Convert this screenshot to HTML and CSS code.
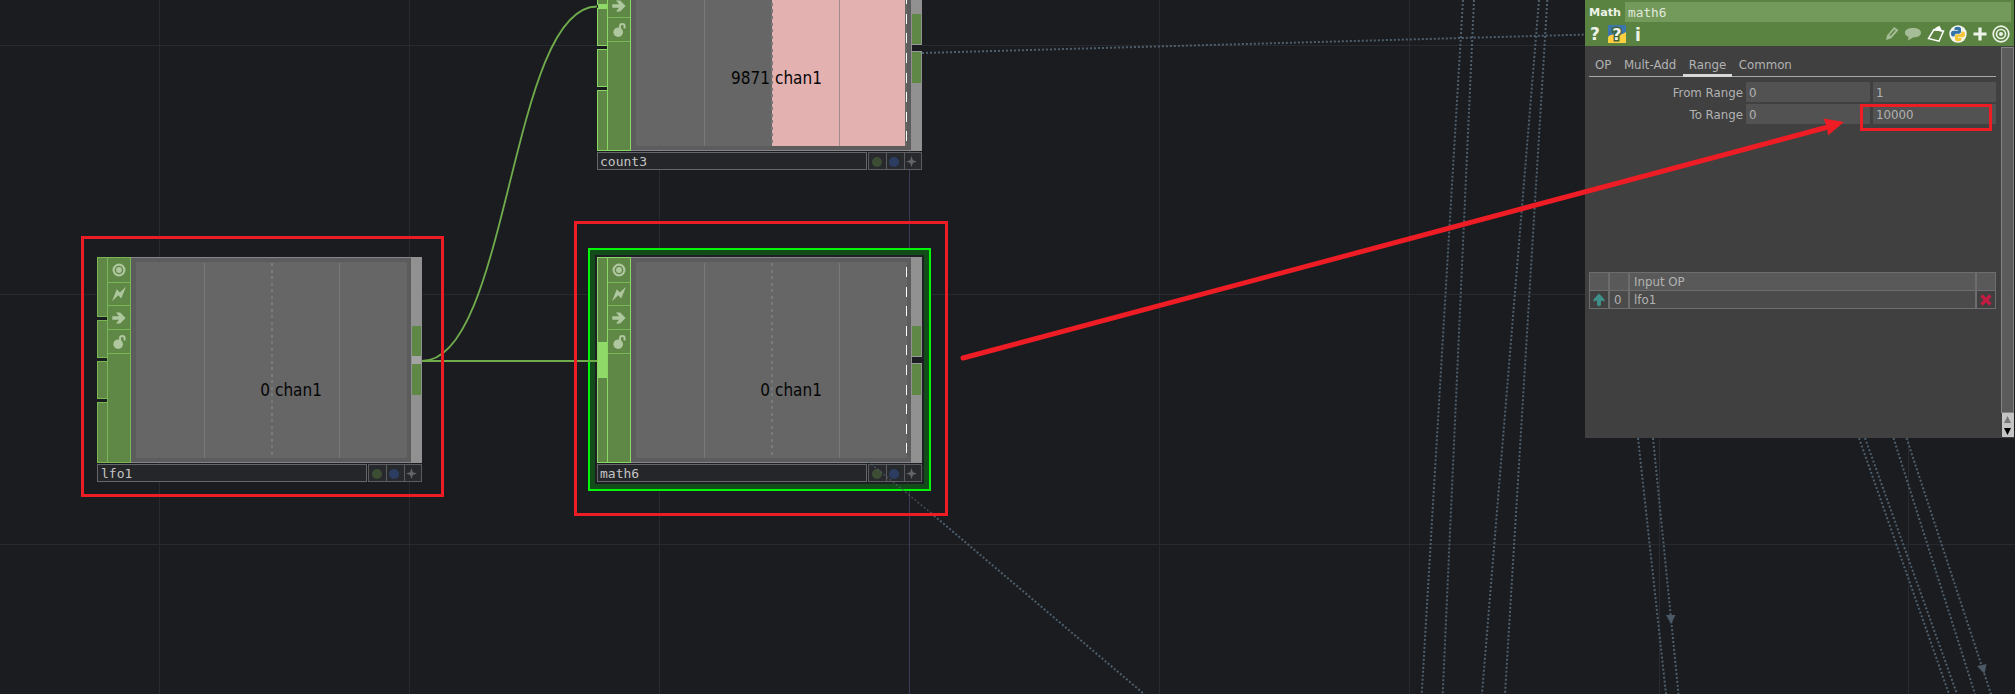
FILE: index.html
```html
<!DOCTYPE html>
<html lang="en">
<head>
<meta charset="utf-8">
<title>Network editor</title>
<link rel="stylesheet" href="styles.css">
</head>
<body>
<svg width="0" height="0" class="defs">
  <symbol id="i-view" viewBox="0 0 16 16"><circle cx="8" cy="8" r="5.4" fill="none" stroke="currentColor" stroke-width="2.2"/><circle cx="8" cy="8" r="2.9" fill="currentColor"/></symbol>
  <symbol id="i-bolt" viewBox="0 0 16 16"><path d="M1 15.2 5.8 3.2 8.8 6.4 15 .8 10.2 12.4 7.2 9.2Z" fill="currentColor"/></symbol>
  <symbol id="i-arrow" viewBox="0 0 16 16"><path d="M1.3 6.2H8L5 2.6H9.2L14.6 8 9.2 13.4H5L8 9.8H1.3Z" fill="currentColor"/></symbol>
  <symbol id="i-lock" viewBox="0 0 16 16"><circle cx="7.2" cy="10.2" r="4.8" fill="currentColor"/><path d="M9 7V4.4A2.3 2.3 0 0 1 13.6 4.4V6.6" fill="none" stroke="currentColor" stroke-width="2"/></symbol>
  <symbol id="i-star" viewBox="0 0 12 12"><path d="M6 0 7.5 4.5 12 6 7.5 7.5 6 12 4.5 7.5 0 6 4.5 4.5Z" fill="currentColor"/></symbol>
</svg>
<main class="network">
  <svg class="wires" width="2015" height="694">
    <path class="grid" d="M159.5 0V694M409.5 0V694M659.5 0V694M1159.5 0V694M1409.5 0V694M1659.5 0V694M1908.5 0V694M0 45.5H2015M0 294.5H2015M0 544.5H2015"/>
    <path class="grid origin" d="M909.5 0V694"/>
    <g class="refs">
      <path d="M922 53 1588 34.5M1463 0 1421.7 694M1474 0 1442.7 694M1539 0 1482 694M1547.3 0 1505 694M1638 438 1666 694M1653 438 1678.5 694M1859 438 1949 694M1865 438 1957 694M1893.5 438 1975 694M1906.5 438 1991 694M931 513 1144 694"/>
    </g>
    <path class="tip" d="M1666 615H1675.5L1671 624ZM1977 666 1986.500 664 1984.500 674Z"/>
    <path class="wire" d="M422 361C509 361 510 6.500 597 6.500"/>
  </svg>

  <section class="node count">
    <div class="body">
      <div class="inputs"><i class="in1"><b class="plug low"></b></i><i class="in2"></i><i class="in2"></i><i class="in3"></i></div>
      <div class="flags"><span class="f1"><svg><use href="#i-view"/></svg></span><span class="f2"><svg><use href="#i-bolt"/></svg></span><span class="f3"><svg><use href="#i-arrow"/></svg></span><span class="f3"><svg><use href="#i-lock"/></svg></span></div>
      <div class="viewer"><div class="plot"><div class="fill"></div><i class="line q1"></i><i class="line dash"></i><i class="line q3"></i><div class="reading"><span>9871</span><span>chan1</span></div><i class="limit"></i></div></div>
      <div class="outputs split"><i></i><b></b><i></i></div>
    </div>
    <div class="bar"><div class="name">count3</div><div class="opts"><span><i class="dot green"></i></span><span><i class="dot blue"></i></span><span><svg><use href="#i-star"/></svg></span></div></div>
  </section>

  <section class="node lfo">
    <div class="body">
      <div class="inputs"><i class="in1"></i><i class="in2"></i><i class="in2"></i><i class="in3"></i></div>
      <div class="flags"><span class="f1"><svg><use href="#i-view"/></svg></span><span class="f2"><svg><use href="#i-bolt"/></svg></span><span class="f3"><svg><use href="#i-arrow"/></svg></span><span class="f3"><svg><use href="#i-lock"/></svg></span></div>
      <div class="viewer"><div class="plot"><i class="line q1"></i><i class="line dash"></i><i class="line q3"></i><div class="reading"><span>0</span><span>chan1</span></div></div></div>
      <div class="outputs"><i></i><b></b><i></i></div>
    </div>
    <div class="bar"><div class="name">lfo1</div><div class="opts"><span><i class="dot green"></i></span><span><i class="dot blue"></i></span><span><svg><use href="#i-star"/></svg></span></div></div>
  </section>

  <div class="selection"><div></div></div>
  <svg class="wires" width="2015" height="694"><path class="wire" d="M422 361H597"/></svg>
  <section class="node math">
    <div class="body">
      <div class="inputs"><i class="in-all"><b class="plug"></b></i></div>
      <div class="flags"><span class="f1"><svg><use href="#i-view"/></svg></span><span class="f2"><svg><use href="#i-bolt"/></svg></span><span class="f3"><svg><use href="#i-arrow"/></svg></span><span class="f3"><svg><use href="#i-lock"/></svg></span></div>
      <div class="viewer"><div class="plot"><i class="line q1"></i><i class="line dash"></i><i class="line q3"></i><div class="reading"><span>0</span><span>chan1</span></div><i class="limit"></i></div></div>
      <div class="outputs split"><i></i><b></b><i></i></div>
    </div>
    <div class="bar"><div class="name">math6</div><div class="opts"><span><i class="dot green"></i></span><span><i class="dot blue"></i></span><span><svg><use href="#i-star"/></svg></span></div></div>
  </section>

  <aside class="panel">
    <header>
      <div class="title"><strong>Math</strong><div class="opname">math6</div></div>
      <div class="tools">
        <svg class="help" width="16" height="18" viewBox="0 0 16 18"><text x="8" y="15" text-anchor="middle">?</text></svg>
        <svg class="pyhelp" width="18" height="18" viewBox="0 0 18 18"><path fill="#3b77ad" d="M0 0H18V18H0Z"/><path fill="#ffcf40" d="M0 12C4 7 12 12 18 7V18H0Z"/><text x="9" y="15" text-anchor="middle">?</text></svg>
        <svg class="info" width="8" height="18" viewBox="0 0 8 18"><text x="4" y="15.500" text-anchor="middle">i</text></svg>
        <span class="space"></span>
        <svg width="16" height="16" viewBox="0 0 16 16"><path d="M2 14 3 9.500 10 1 14.500 4 7 12.500Z" fill="#a5bd96"/><path d="M6 9.500 11 4" stroke="#5a8341" stroke-width="1.300"/></svg>
        <svg width="18" height="16" viewBox="0 0 18 16"><path d="M9 2C14 2 17 4 17 6.800S14 11.500 9 11.500L4 14.500 4.600 10.800C2 10 1 8.600 1 6.800 1 4 4 2 9 2Z" fill="#a5bd96"/></svg>
        <svg width="18" height="18" viewBox="0 0 18 18"><path d="M7 4.500 1.500 13.500 12 16.200 16.500 6Z" fill="none" stroke="#fff" stroke-width="1.500"/><path d="M7 5.500 8.500 2.800 12.500 .8 15.500 6.500Z" fill="#fff"/></svg>
        <svg width="18" height="18" viewBox="0 0 18 18"><circle cx="9" cy="9" r="8.700" fill="#f4f6ee"/><path d="M5.500 5V3.500Q5.500 1.800 8.600 1.800T12 3.800V7Q12 8.800 10 8.800H7.400Q5.400 8.800 5.400 11.500H4Q2 11.500 2 8.600T4.500 5.800H9V5Z" fill="#3472a8"/><path d="M12.500 13V14.500Q12.500 16.200 9.400 16.200T6 14.200V11Q6 9.200 8 9.200H10.600Q12.600 9.200 12.600 6.500H14Q16 6.500 16 9.400T13.500 12.200H9V13Z" fill="#f5c637"/></svg>
        <svg width="16" height="16" viewBox="0 0 16 16"><path d="M8 1.500V14.500M1.500 8H14.500" stroke="#eef3ea" stroke-width="3.200"/></svg>
        <svg width="18" height="18" viewBox="0 0 18 18"><g fill="none" stroke="#eef3ea" stroke-width="1.700"><circle cx="9" cy="9" r="7.800"/><circle cx="9" cy="9" r="4.500"/></g><circle cx="9" cy="9" r="2" fill="#eef3ea"/></svg>
      </div>
    </header>
    <div class="content">
      <div class="page">
        <nav><span>OP</span><span>Mult-Add</span><span class="on">Range</span><span>Common</span></nav>
        <div class="params">
          <label>From Range</label><div class="field">0</div><div class="field">1</div>
          <label>To Range</label><div class="field">0</div><div class="field">10000</div>
        </div>
        <div class="table">
          <div class="head"></div><div class="head"></div><div class="head">Input OP</div><div class="head"></div>
          <div class="act"><svg width="12" height="14" viewBox="0 0 12 14"><path d="M6 .5 11.500 6.500V8.500L8 7.500V12L6 13.500 4 12V7.500L.5 8.500V6.500Z" fill="#3f8f8a"/></svg></div><div class="num">0</div><div>lfo1</div><div class="act"><svg width="12" height="12" viewBox="0 0 12 12"><path d="M1.500 1.500 10.500 10.500M10.500 1.500 1.500 10.500" stroke="#c31b42" stroke-width="3.200"/></svg></div>
        </div>
      </div>
      <div class="scroll"><div class="track"></div><div class="steps"><svg width="12" height="24" viewBox="0 0 12 24"><path d="M2 10 5.500 3 9 10Z" fill="#777"/><path d="M2 15 5.500 22 9 15Z" fill="#000"/></svg></div></div>
    </div>
  </aside>

  <svg class="marks" width="2015" height="694">
    <path class="faint" d="M865 459 931 513"/>
    <g class="box"><rect x="82.500" y="237.500" width="360" height="258"/><rect x="575.500" y="222.500" width="371" height="292"/><rect x="1861.500" y="105.500" width="129" height="24"/></g>
    <path class="arrow" d="M963 358 1828 127"/>
    <path d="M1844 122 1823.500 118.500 1827 127 1828 135.500Z" fill="#ee1c24"/>
  </svg>
</main>
</body>
</html>
```
FILE: styles.css
```css
* { box-sizing: border-box; }
body { margin: 0; background: #1b1c20; overflow: hidden; font-family: "DejaVu Sans", Verdana, sans-serif; }
.defs { position: absolute; }
.network { position: relative; width: 2015px; height: 694px; overflow: hidden; background: #1b1c20; }
.wires, .marks { position: absolute; inset: 0; }
.grid { stroke: #292a31; fill: none; }
.origin { stroke: #3b3a57; }
.refs { fill: none; stroke: #4d5e6c; stroke-width: 2; stroke-dasharray: 2 2; }
.tip { fill: #4b5966; }
.wire { fill: none; stroke: #70ac4c; stroke-width: 1.8; }

.node { position: absolute; width: 325px; }
.count { left: 597px; top: -55px; }
.lfo { left: 97px; top: 257px; }
.math { left: 597px; top: 257px; }
.body { display: flex; height: 206px; }
.inputs { width: 10px; display: flex; flex-direction: column; gap: 3px; }
.inputs > i { background: #5f8746; border: 1px solid #8ad863; border-right: 0; display: flex; flex-direction: column; }
.lfo .inputs > i { border-color: #79b656; }
.in1 { height: 60px; }
.in2 { height: 38px; }
.in3 { height: 61px; }
.inputs > .in-all { height: 206px; }
.plug { background: #8fd968; height: 36px; margin-top: 84px; }
.plug.low { height: 5px; margin-top: 58px; flex: none; position: relative; }
.flags { width: 24px; background: #5f8746; border: 1px solid #8ad863; }
.lfo .flags { border-color: #79b656; }
.flags span { display: flex; align-items: center; justify-content: center; padding-right: 1px; border-bottom: 1.5px solid #79b656; color: #afc79f; }
.flags svg { width: 16px; height: 16px; }
.f1 { height: 25px; }
.f2 { height: 23px; }
.f3 { height: 24px; }
.viewer { width: 280px; background: #5c5c5c; border: 1px solid #85878a; border-width: 1px 0; padding: 4px 4px 4px 5px; display: flex; }
.plot { position: relative; flex: 1; background: #666; }
.line { position: absolute; top: 1px; bottom: 0; width: 1px; background: #7a7a7a; }
.q1 { left: 68px; }
.dash { left: 135px; width: 1.5px; background: repeating-linear-gradient(#7a7a7a 0 3px, transparent 3px 6.5px); }
.q3 { left: 203px; }
.count .q3 { background: #a28a8a; }
.fill { position: absolute; left: 136px; right: 2px; top: 0; bottom: 0; background: #e4b1b1; }
.limit { position: absolute; left: 270px; top: 5px; bottom: 4px; width: 1px; background: repeating-linear-gradient(#fff 0 10px, transparent 10px 19.6px); }
.reading { position: absolute; left: 0; top: 116px; display: grid; grid-template-columns: 134px 1fr; column-gap: 5px; font: 17px/24px "DejaVu Sans Condensed", "DejaVu Sans", sans-serif; font-stretch: condensed; color: #050505; }
.reading span:first-child { text-align: right; }
.outputs { width: 11px; background: #919191; padding: 69px 1px 0; display: flex; flex-direction: column; }
.outputs i { height: 30px; background: #5f8746; }
.outputs b { height: 8px; background: #a3a3a6; }
.outputs i:last-child { height: 31px; }
.outputs.split b { background: #1b1c20; height: 8px; border: solid #999; border-width: 1px 0; margin-right: -1px; }
.bar { margin-top: 1px; display: flex; gap: 1px; height: 18px; }
.name { width: 270px; border: 1px solid #65666a; background: #25262a; padding-left: 2px; font: 13px/18px "DejaVu Sans Mono", monospace; color: #c4c4c4; }
.lfo .name { padding-left: 3px; }
.opts { flex: 1; display: grid; grid-template-columns: repeat(3, 1fr); border: 1px solid #5b5c60; background: #28292d; }
.opts span { display: flex; align-items: center; justify-content: center; padding: 1px 2px 0 0; }
.opts span + span { border-left: 1px solid #5b5c60; }
.opts svg { width: 11px; height: 11px; color: #64656a; }
.dot { width: 10px; height: 10px; border-radius: 50%; }
.dot.green { background: #3d4d34; }
.dot.blue { background: #2c3d62; }
.selection { position: absolute; left: 588px; top: 248px; width: 343px; height: 243px; border: 2px solid #00f508; background: #124c18; padding: 5px; display: flex; }
.selection div { flex: 1; background: #1d1f25; }

.panel { position: absolute; left: 1585px; top: 0; width: 429px; height: 438px; display: flex; flex-direction: column; background: #404040; color: #b2b2b2; font-size: 11.8px; }
.panel header { height: 46px; background: #5a8341; padding-top: 2px; }
.title { display: flex; height: 20px; }
.title strong { width: 40px; padding-left: 4px; line-height: 21px; font-size: 11.2px; color: #eef3ea; }
.opname { width: 386px; background: #739a5b; padding-left: 3px; font: 12.8px/22px "DejaVu Sans Mono", monospace; color: #e0e8da; }
.tools { display: flex; align-items: center; height: 24px; padding: 0 4px 0 2px; gap: 4.5px; }
.tools text { font: bold 17px "DejaVu Sans", sans-serif; fill: #eef3ea; }
.pyhelp text { stroke: #41643a; stroke-width: 3px; paint-order: stroke; font-size: 16px; }
.info { margin-left: 4px; }
.space { flex: 1; }
.content { flex: 1; display: flex; justify-content: space-between; padding-top: 1px; }
.page { width: 407px; margin-left: 4px; }
nav { display: flex; height: 30px; padding-left: 1px; border-bottom: 1px solid #a8a8a8; }
nav span { height: 30px; padding: 0 6px; line-height: 36px; margin-right: .5px; }
nav span:first-child { padding-left: 5px; }
nav .on { border-bottom: 3px solid #d8d8d8; }
.params { display: grid; grid-template-columns: 154px 124px 123px; grid-auto-rows: 20px; gap: 2px 3px; margin-top: 5px; line-height: 22px; }
.params label { text-align: right; }
.field { background: #525252; padding-left: 3px; }
.table { margin-top: 148px; display: grid; grid-template-columns: 18px 18px 1fr 18px; grid-template-rows: 17px 17px; gap: 1px 2px; padding: 1px; background: #6d6d6d; line-height: 18px; }
.table div { background: #4b4b4b; padding-left: 4px; }
.table .head { background: #595959; }
.table .act { background: #404040; padding: 0; display: flex; align-items: center; justify-content: center; }
.scroll { width: 13px; display: flex; flex-direction: column; }
.track { flex: 1; border: 1px solid #858585; background: #5b5b5b; }
.steps { height: 24px; background: #c4c4c4; margin: 0 0 1px 1px; }
.steps svg { display: block; }
.box { fill: none; stroke: #ee1c24; stroke-width: 3; }
.arrow { stroke: #ee1c24; stroke-width: 5; stroke-linecap: round; fill: none; }
.faint { stroke: #53606a; stroke-width: 1.5; stroke-dasharray: 2 2; opacity: .7; }
```
